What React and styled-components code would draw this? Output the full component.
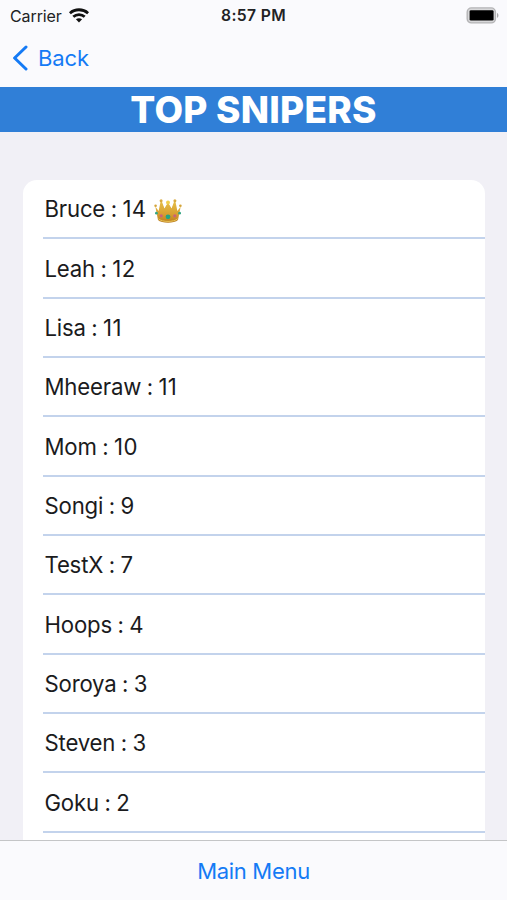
import React from 'react';

import styled, { createGlobalStyle } from 'styled-components';


const GlobalStyle = createGlobalStyle`

    * {
        box-sizing: border-box;
    }

    body {
        margin: 0;
        background: #f1f0f6;
        font-family: Inter, "Liberation Sans", sans-serif;
        overflow: hidden;
    }

`;

const Wrapper = styled.div`

    width: 100%;
    height: 100vh;
    display: flex;
    flex-direction: column;
    overflow: hidden;

`;

const StatusBar = styled.div`

    height: 30px;
    flex-shrink: 0;
    display: grid;
    grid-template-columns: 1fr auto 1fr;
    align-items: center;
    padding: 0 8px 0 10px;
    background: #fafafd;
    color: #222224;
    font-size: 16px;
    line-height: 30px;

`;

const Carrier = styled.div`

    display: flex;
    align-items: center;
    gap: 7px;
    letter-spacing: -0.1px;

    svg {
        margin-top: -1px;
    }

`;

const Clock = styled.div`

    margin-left: -2px;
    padding-top: 1px;
    font-size: 15.7px;
    font-weight: 600;
    letter-spacing: 0.35px;

`;

const BatteryBox = styled.div`

    display: flex;
    justify-content: flex-end;
    padding-bottom: 1px;

`;

const NavBar = styled.div`

    height: 57px;
    flex-shrink: 0;
    display: flex;
    align-items: center;
    padding: 0 12px 1px;
    background: #fafafd;

`;

const TextButton = styled.button`

    display: flex;
    align-items: center;
    gap: 10px;
    padding: 0;
    border: none;
    background: none;
    color: #147af5;
    font-family: inherit;
    font-size: 22px;
    line-height: 30px;
    letter-spacing: ${(props) => props.$spacing || '0'};
    cursor: pointer;

`;

const TitleBanner = styled.h1`

    height: 45px;
    flex-shrink: 0;
    margin: 0;
    background: #307fd7;
    color: white;
    font-size: 37px;
    font-weight: 800;
    line-height: 45px;
    letter-spacing: 0.25px;
    text-align: center;

`;

const ListArea = styled.div`

    flex: 1;
    min-height: 0;
    display: flex;
    flex-direction: column;
    padding: 48px 22px 0 23px;
    overflow: hidden;

`;

const ScoreList = styled.ul`

    flex: 1;
    margin: 0;
    padding: 0 0 0 20px;
    list-style: none;
    background: white;
    border-radius: 14px 14px 0 0;

`;

const ScoreRow = styled.li`

    height: 59.33px;
    display: flex;
    align-items: center;
    padding: 0.5px 0 0 1.5px;
    border-bottom: 2px solid #c3d3ec;
    color: #1b1b1d;
    font-size: 22.2px;
    white-space: pre;
    letter-spacing: -0.2px;
    word-spacing: -0.5px;

    svg {
        margin: 5px 0 0 7px;
    }

`;

const Score = styled.span`

    letter-spacing: 0.4px;
    font-kerning: none;

`;

const BottomBar = styled.div`

    height: 60px;
    flex-shrink: 0;
    display: flex;
    align-items: center;
    justify-content: center;
    border-top: 1px solid #c4c5c7;
    background: #fafafd;

`;


const scores = [
    { name: 'Bruce', score: 14 },
    { name: 'Leah', score: 12 },
    { name: 'Lisa', score: 11 },
    { name: 'Mheeraw', score: 11 },
    { name: 'Mom', score: 10 },
    { name: 'Songi', score: 9 },
    { name: 'TestX', score: 7 },
    { name: 'Hoops', score: 4 },
    { name: 'Soroya', score: 3 },
    { name: 'Steven', score: 3 },
    { name: 'Goku', score: 2 },
];


function WifiIcon(){
    return(
        <svg width="20" height="15" viewBox="0 0 20 15" fill="none" stroke="#111" strokeWidth="2.8">
            <path d="M.9 5.2C6 .6 14 .6 19.1 5.2" />
            <path d="M4.3 8.8C7.5 5.9 12.5 5.9 15.7 8.8" />
            <path d="M10 14.4L6.9 11.3C8.6 9.8 11.4 9.8 13.1 11.3Z" fill="#111" stroke="none" />
        </svg>
    );
}

function BatteryIcon(){
    return(
        <svg width="33" height="17" viewBox="0 0 33 17">
            <rect x="1.2" y="0.9" width="28.2" height="15" rx="4.2" fill="#d8d8da" stroke="#b4b4b6" strokeWidth="1.4" />
            <rect x="3.6" y="3.2" width="24" height="10.4" rx="1.4" fill="#000" />
            <path d="M31 6C32.9 6.6 32.9 10.2 31 10.8Z" fill="#aaaaac" />
        </svg>
    );
}

function BackIcon(){
    return(
        <svg width="16" height="26" viewBox="0 0 16 26" fill="none" stroke="#147af5" strokeWidth="3" strokeLinecap="round" strokeLinejoin="round">
            <path d="M14 2L2.6 13L14 24" />
        </svg>
    );
}

function CrownIcon(){
    return(
        <svg width="28" height="24" viewBox="0 0 28 24">
            <defs>
                <linearGradient id="gold" x1="0" y1="0" x2="0" y2="1">
                    <stop offset="0" stopColor="#e6bf48" />
                    <stop offset="0.6" stopColor="#d7a031" />
                    <stop offset="1" stopColor="#b97b1d" />
                </linearGradient>
            </defs>
            <path d="M6 14L7.4 4L11 11L14 3.5L17 11L20.6 4L22 14Z" fill="#b88324" />
            <path d="M1.3 7.5L4.6 12L6.7 2H7.7L10.4 9.6L14 3.6L17.6 9.6L20.3 2H21.3L23.4 12L26.7 7.5L24 21C20.5 24.6 7.5 24.6 4 21Z" fill="url(#gold)" />
            <path d="M4.4 19.8C8 23.3 20 23.3 23.6 19.8" fill="none" stroke="#e9c455" strokeWidth="1" />
            <circle cx="1.6" cy="6.8" r="1.3" fill="#d4a43a" />
            <circle cx="7.1" cy="1.7" r="1.5" fill="#d9ab3e" />
            <circle cx="14" cy="3.4" r="2" fill="#f1cf4c" />
            <circle cx="20.9" cy="1.7" r="1.5" fill="#d9ab3e" />
            <circle cx="26.4" cy="6.8" r="1.3" fill="#d4a43a" />
            <circle cx="14" cy="17.8" r="2.4" fill="#20a584" />
            <circle cx="7.2" cy="16.8" r="1.6" fill="#c9627a" />
            <circle cx="20.8" cy="16.8" r="1.6" fill="#c9627a" />
            <circle cx="2.4" cy="14.2" r="1.4" fill="#35a684" />
            <circle cx="25.6" cy="14.2" r="1.4" fill="#35a684" />
        </svg>
    );
}


function App(){

    return(

        <Wrapper>
            <GlobalStyle />
            <StatusBar>
                <Carrier>Carrier <WifiIcon /></Carrier>
                <Clock>8:57 PM</Clock>
                <BatteryBox><BatteryIcon /></BatteryBox>
            </StatusBar>

            <NavBar>
                <TextButton $spacing="-0.1px"><BackIcon />Back</TextButton>
            </NavBar>

            <TitleBanner>TOP SNIPERS</TitleBanner>

            <ListArea>
                <ScoreList>
                    {scores.map((item, index) => (
                        <ScoreRow key={item.name}>
                            <span>{item.name} : <Score>{item.score}</Score></span>
                            {index === 0 && <CrownIcon />}
                        </ScoreRow>
                    ))}
                </ScoreList>
            </ListArea>

            <BottomBar>
                <TextButton $spacing="-0.3px">Main Menu</TextButton>
            </BottomBar>
        </Wrapper>

    );

}

export default App;
